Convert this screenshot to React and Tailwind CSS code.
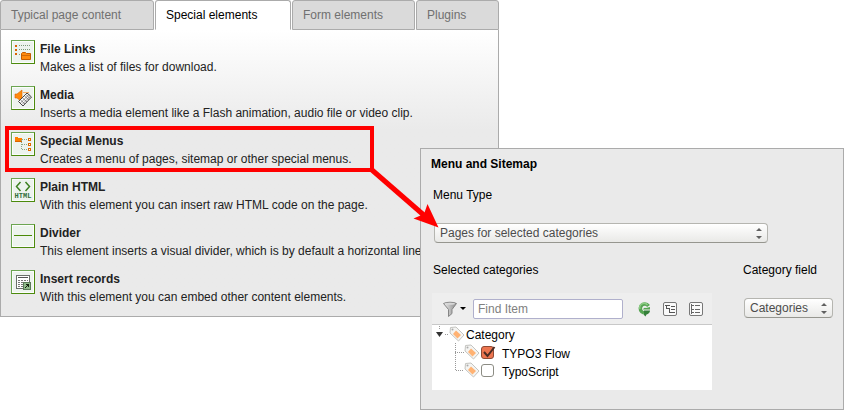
const elements = [
  { title: 'File Links', text: 'Makes a list of files for download.', icon: FileLinksIcon },
  { title: 'Media', text: 'Inserts a media element like a Flash animation, audio file or video clip.', icon: MediaIcon },
  { title: 'Special Menus', text: 'Creates a menu of pages, sitemap or other special menus.', icon: MenuIcon },
  { title: 'Plain HTML', text: 'With this element you can insert raw HTML code on the page.', icon: HtmlIcon },
  { title: 'Divider', text: 'This element inserts a visual divider, which is by default a horizontal line.', icon: DividerIcon },
  { title: 'Insert records', text: 'With this element you can embed other content elements.', icon: RecordsIcon },
];

function IconFrame({ children }) {
  return (
    <svg className="size-6 shrink-0" viewBox="0 0 24 24" aria-hidden="true">
      <rect width="24" height="24" fill="#4c8a0c" />
      <path d="M0 0H24L23 1H1V23L0 24Z" fill="#6ca552" />
      <rect x="1" y="1" width="22" height="22" fill="#fbfdfb" />
      <rect x="2" y="2" width="20" height="20" fill="#edf3ee" />
      {children}
    </svg>
  );
}

function FileLinksIcon() {
  return (
    <IconFrame>
      <g shapeRendering="crispEdges">
        <path d="M4 5h2v2h-2zM4 9h2v2h-2zM4 13h2v2h-2z" fill="#d96400" />
        <path d="M8 5.500h12M8 9.500h12M8 14.500h3" stroke="#7d9a78" strokeDasharray="1 1" />
      </g>
      <path d="M10.500 13.500l1-1h3l1 1h4v6h-9z" fill="#ff8a0c" stroke="#c45c00" />
      <path d="M11 15.500h8" stroke="#d06a08" />
    </IconFrame>
  );
}

function MediaIcon() {
  return (
    <IconFrame>
      <path d="M4 8h2l5-4v12l-5-4H4z" fill="#ff8a0c" stroke="#d96400" strokeWidth=".6" />
      <path d="M12 6.500h6M13 9.500h2" stroke="#f5ae68" />
      <path d="M7.500 15.500L16 7l4.500 4L12 20z" fill="#fff" stroke="#444" />
      <path d="M9.500 14l4.500 4M11.500 12l4.500 4M13.500 10l4.500 4M15 8.500l4 4" stroke="#666" strokeWidth=".8" />
      <path d="M9.500 17L18 8.500M11 18.500L19.500 10" stroke="#555" strokeWidth=".6" />
    </IconFrame>
  );
}

function MenuIcon() {
  return (
    <IconFrame>
      <g shapeRendering="crispEdges">
        <path d="M4 5h3v1h4v4H4z" fill="#ff7f00" />
        <path d="M4 9h7v1H4z" fill="#d96400" />
        <path d="M11 7.500h6M10.500 8v9M11 12.500h6M11 17.500h6" stroke="#8ba885" strokeDasharray="1 1" fill="none" />
        <path d="M17.500 6.500h2v2h-2zM17.500 11.500h2v2h-2zM17.500 16.500h2v2h-2z" fill="#fff" stroke="#e06a00" />
      </g>
    </IconFrame>
  );
}

function HtmlIcon() {
  return (
    <IconFrame>
      <path d="M9.500 4L5.500 8.500l4 4.500M14.500 4l4 4.500-4 4.500" fill="none" stroke="#3c8020" strokeWidth="1.500" />
      <text x="12" y="20" textAnchor="middle" fill="#2f6f3a" className="font-['Liberation_Mono'] text-[7px] font-bold">HTML</text>
    </IconFrame>
  );
}

function DividerIcon() {
  return (
    <IconFrame>
      <rect x="3" y="11" width="18" height="1" fill="#4a8a06" />
    </IconFrame>
  );
}

function RecordsIcon() {
  return (
    <IconFrame>
      <g shapeRendering="crispEdges">
        <path d="M5.500 5.500h13v13h-13z" fill="#fff" stroke="#6a6f6a" />
        <path d="M7 7.500h10" stroke="#555" />
        <path d="M7 10.500h10M7 12.500h7M7 14.500h5M7 16.500h5" stroke="#777" strokeDasharray="2 1" />
        <rect x="12.500" y="12.500" width="7" height="7" fill="#8fb98a" stroke="#5b7a58" />
        <path d="M15 14h3v3h-1v-1h-1v1h-1v1h-1v-1h1v-1h1v-1h-1z" fill="#14240f" />
      </g>
    </IconFrame>
  );
}

function Tag() {
  return (
    <svg className="size-4 shrink-0" viewBox="0 0 16 16" aria-hidden="true">
      <path d="M1.500 1.500L7 1l8 8-5.500 6L1 7z" fill="#f4f4f2" stroke="#c4c4c0" />
      <path d="M7 4.500l5 4.500-3.500 3.500L4 8z" fill="#ffb273" />
      <circle cx="3.500" cy="3.500" r="1" fill="#aaa" />
    </svg>
  );
}

function Funnel() {
  return (
    <svg className="size-4" viewBox="0 0 16 16" aria-hidden="true">
      <defs>
        <linearGradient id="funnel">
          <stop offset="0" stopColor="#eee" />
          <stop offset="1" stopColor="#8a8a8a" />
        </linearGradient>
      </defs>
      <path d="M1.500 2.500C4 .8 12 .8 14.500 2.500L10 8.500v4L6.500 15.500v-7z" fill="url(#funnel)" stroke="#858585" />
      <ellipse cx="8" cy="2.700" rx="5" ry="1" fill="#d8d8d8" />
    </svg>
  );
}

function Refresh() {
  return (
    <svg className="size-4" viewBox="0 0 16 16" aria-hidden="true">
      <path d="M12.500 5A4.500 4.500 0 1 0 8 12" fill="none" stroke="#56a552" strokeWidth="3.600" />
      <path d="M11.500 4A4.300 4.300 0 0 0 4 8" fill="none" stroke="#8ccb84" strokeWidth="1.500" />
      <path d="M7 8.500a2 2 0 0 1 3-1.500l4-1v2.500H11z" fill="#56a552" />
      <path d="M8 9.500h6c0 2-1.500 3.500-3.500 4L9.500 15.500 8 14z" fill="#35803a" />
    </svg>
  );
}

function TreeButtonIcon({ expand }) {
  return (
    <svg className="size-4" viewBox="0 0 16 16" aria-hidden="true">
      <rect x="1.500" y="1.500" width="13" height="13" rx="1.500" fill="#fafafa" stroke="#777" />
      {expand ? (
        <path d="M3 4.500h5M4.500 4v4M5 7.500h3M7.500 7v5M8 11.500h2M9 5.500h4M9 8.500h4M10 11.500h3" fill="none" stroke="#555" />
      ) : (
        <path d="M3.500 3v10M4 4.500h2M4 8.500h2M4 11.500h2M7 4.500h5M7 8.500h5M7 11.500h5" fill="none" stroke="#666" />
      )}
    </svg>
  );
}

function Select({ id, children, className }) {
  return (
    <div className={`relative ${className}`}>
      <select id={id} className="block h-5 w-full appearance-none rounded border border-[#b5b5b0] border-b-[#96968f] bg-linear-to-b from-white to-[#e9e9e7] pl-[5px] text-xs text-[#4c4c4c]">
        <option>{children}</option>
      </select>
      <svg className="pointer-events-none absolute top-1 right-1.5 h-3 w-1.5" viewBox="0 0 6 12" aria-hidden="true">
        <path d="M0 4l3-3 3 3zM0 9l3 3 3-3z" fill="#606060" />
      </svg>
    </div>
  );
}

function Tab({ children, active, className }) {
  return (
    <button
      role="tab"
      aria-selected={!!active}
      className={`h-[30px] rounded-t-[3px] border border-[#ababab] pl-2.5 text-left whitespace-nowrap ${active ? 'border-b-white bg-white text-black' : 'bg-[#dadada] text-[#707070]'} ${className}`}
    >
      {children}
    </button>
  );
}

function CategoryRow({ label, checked, last }) {
  return (
    <li className="flex h-[18px] items-center">
      <svg className="h-[18px] w-[9px] shrink-0" viewBox="0 0 9 18" aria-hidden="true">
        <path d={last ? 'M.5 0v9.500H9' : 'M.5 0v18M0 9.500h9'} fill="none" stroke="#999" strokeDasharray="1 1" />
      </svg>
      <Tag />
      <label className="flex items-center gap-2">
        <span className="relative ml-px size-[13px]">
          <input type="checkbox" defaultChecked={checked} className="peer block size-[13px] appearance-none rounded-[3px] border border-[#8c8c84] bg-white checked:border-[#8d4a35] checked:bg-[#ed7550]" />
          <svg className="pointer-events-none absolute -top-px left-0 hidden size-[15px] peer-checked:block" viewBox="0 0 15 15" aria-hidden="true">
            <path d="M3 7l3.500 4L13.500 2" fill="none" stroke="#4a2c24" strokeWidth="2" />
          </svg>
        </span>
        <span className="pt-1">{label}</span>
      </label>
    </li>
  );
}

export default function App() {
  return (
    <main className="relative bg-white font-['Liberation_Sans',Arial,sans-serif] text-xs leading-[18px] text-black">
      <section className="w-[499px]">
        <div role="tablist" className="flex gap-px">
          <Tab className="w-[154px]">Typical page content</Tab>
          <Tab className="w-[136px]" active>Special elements</Tab>
          <Tab className="w-[123px]">Form elements</Tab>
          <Tab className="grow">Plugins</Tab>
        </div>
        <ul className="flex flex-col gap-2.5 border border-t-0 border-[#ababab] bg-linear-to-b from-white to-[#eaeaea] to-[100px] p-2.5">
          {elements.map(({ title, text, icon: Icon }) => (
            <li key={title} className="flex gap-[5px] whitespace-nowrap text-[#222]">
              <Icon />
              <div>
                <h3 className="font-bold">{title}</h3>
                <p>{text}</p>
              </div>
            </li>
          ))}
        </ul>
      </section>

      <section className="relative -mt-[169px] ml-[420px] border border-[#ababab] bg-[#eaeaea] px-2.5 pt-1.5 pb-[19px]">
        <h2 className="font-bold">Menu and Sitemap</h2>
        <label htmlFor="menu-type" className="mt-[13px] block pl-0.5">Menu Type</label>
        <Select id="menu-type" className="mt-[19px] ml-[3px] w-[334px]">Pages for selected categories</Select>
        <div className="mt-[18px] flex justify-between">
          <div className="w-[281px] pl-px">
            <h3 className="pl-px">Selected categories</h3>
            <div className="mt-3.5 flex h-8 items-center border-b border-[#c8c8c8] bg-[#eeeeee] pr-2">
              <button aria-label="Filter" className="ml-2.5 flex items-center gap-0.5">
                <Funnel />
                <span className="border-x-[3px] border-t-[3px] border-x-transparent border-t-black" />
              </button>
              <input aria-label="Find Item" placeholder="Find Item" className="ml-[7px] h-5 w-[150px] rounded-[2px] border border-[#b0b0cc] bg-white px-1 placeholder:text-[#808080]" />
              <button aria-label="Refresh" className="ml-[13px]"><Refresh /></button>
              <button aria-label="Expand all" className="ml-2.5"><TreeButtonIcon expand /></button>
              <button aria-label="Collapse all" className="ml-2.5"><TreeButtonIcon /></button>
            </div>
            <div className="h-[65px] bg-white">
              <div className="flex h-[18px] items-center pl-1">
                <svg className="h-4 w-[13px]" viewBox="0 0 13 16" aria-hidden="true">
                  <path d="M0 6h7l-3.500 5z" fill="#333" />
                  <path d="M3.500 0v4M9 8.500h4" stroke="#999" strokeDasharray="1 1" />
                </svg>
                <Tag />
                <span className="pt-0.5 pl-px">Category</span>
              </div>
              <ul className="pl-[23px]">
                <CategoryRow label="TYPO3 Flow" checked />
                <CategoryRow label="TypoScript" last />
              </ul>
            </div>
          </div>
          <div className="w-[90px]">
            <label htmlFor="category-field">Category field</label>
            <Select id="category-field" className="mt-[19px] ml-px w-[89px]">Categories</Select>
          </div>
        </div>
      </section>

      <svg className="pointer-events-none absolute top-0 left-0 h-[240px] w-[450px]" viewBox="0 0 450 240" aria-hidden="true">
        <rect x="7" y="128" width="365" height="42" fill="none" stroke="#ff0000" strokeWidth="4" />
        <path d="M372 170L426 217" stroke="#ff0000" strokeWidth="5" />
        <path d="M438.500 227.500L427.500 204L424 214L413.500 218.500Z" fill="#ff0000" />
      </svg>
    </main>
  );
}
